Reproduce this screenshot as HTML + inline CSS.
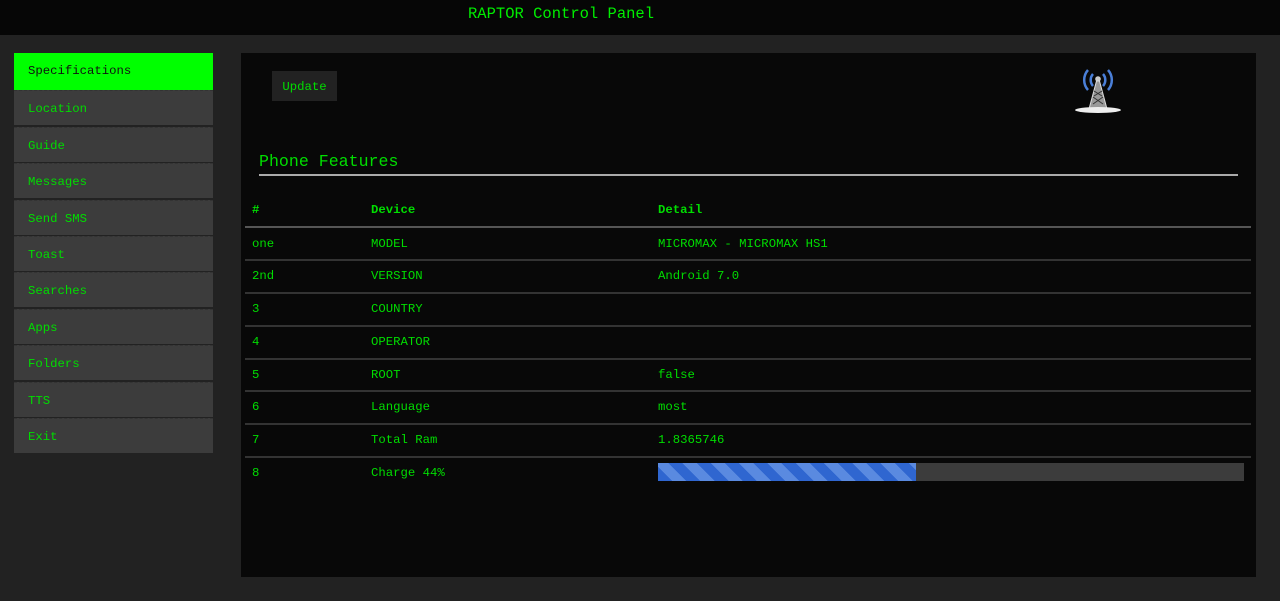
<!DOCTYPE html>
<html><head><style>
*{margin:0;padding:0;box-sizing:border-box}
body{width:1280px;height:601px;background:#222;font-family:"Liberation Mono","DejaVu Sans Mono",monospace;color:#0d0;position:relative;overflow:hidden;font-size:12.3px}
.hdr{position:absolute;left:0;top:0;width:1280px;height:35px;background:#060606}
.hdr span{position:absolute;left:468px;top:5px;font-size:15.5px;color:#0e0}
.nav{position:absolute;left:14px;width:199px;height:35px;background:#3c3c3c;border-top:1px dashed #333;padding-left:14px;line-height:36px;color:#0d0}
.nav.act{background:#0f0;color:#111;height:37px;line-height:37px;border-top:none}
.main{position:absolute;left:241px;top:53px;width:1015px;height:524px;background:#080808}
.abs{position:absolute}
.btn{left:31px;top:18px;width:65px;height:30px;background:#222;line-height:32px;text-align:center;color:#0d0}
.ttl{left:18px;top:99px;font-size:16.6px;color:#0d0}
.tl{left:18px;top:121px;width:979px;height:2px;background:#aaa}
.row{position:absolute;left:4px;width:1006px;height:2px;background:#333}
.c{position:absolute;color:#0d0;margin-top:1px}
b{font-weight:bold}
</style></head><body>
<div class="hdr"><span>RAPTOR Control Panel</span></div>
<div class="nav act" style="top:53px">Specifications</div>
<div class="nav" style="top:90px">Location</div>
<div class="nav" style="top:127px">Guide</div>
<div class="nav" style="top:163px">Messages</div>
<div class="nav" style="top:200px">Send SMS</div>
<div class="nav" style="top:236px">Toast</div>
<div class="nav" style="top:272px">Searches</div>
<div class="nav" style="top:309px">Apps</div>
<div class="nav" style="top:345px">Folders</div>
<div class="nav" style="top:382px">TTS</div>
<div class="nav" style="top:418px">Exit</div>
<div class="main">
<div class="abs btn">Update</div>
<svg class="abs" style="left:832px;top:14px" width="50" height="48" viewBox="0 0 50 48">
<g fill="none" stroke="#4a7fd8" stroke-width="2.5">
<path d="M20 7a9 9 0 0 0 0 12"/><path d="M15 3a15 15 0 0 0 0 20"/>
<path d="M30 7a9 9 0 0 1 0 12"/><path d="M35 3a15 15 0 0 1 0 20"/></g>
<circle cx="25" cy="12" r="2.8" fill="#ccc"/>
<path d="M23.5 14L16 42h18L26.5 14z" fill="#999" stroke="#ddd" stroke-width="1"/>
<path d="M20 30l10 7M30 30l-10 7M21 24l8 5M29 24l-8 5" stroke="#333" stroke-width="1"/>
<ellipse cx="25" cy="43" rx="23" ry="3" fill="#eee"/>
</svg>
<div class="abs ttl">Phone Features</div>
<div class="abs tl"></div>
<div class="c" style="left:11px;top:149px"><b>#</b></div>
<div class="c" style="left:130px;top:149px"><b>Device</b></div>
<div class="c" style="left:417px;top:149px"><b>Detail</b></div>
<div class="row" style="top:173px;background:#555"></div>
<div class="c" style="left:11px;top:183px">one</div><div class="c" style="left:130px;top:183px">MODEL</div><div class="c" style="left:417px;top:183px">MICROMAX - MICROMAX HS1</div>
<div class="row" style="top:206px"></div>
<div class="c" style="left:11px;top:215px">2nd</div><div class="c" style="left:130px;top:215px">VERSION</div><div class="c" style="left:417px;top:215px">Android 7.0</div>
<div class="row" style="top:239px"></div>
<div class="c" style="left:11px;top:248px">3</div><div class="c" style="left:130px;top:248px">COUNTRY</div>
<div class="row" style="top:272px"></div>
<div class="c" style="left:11px;top:281px">4</div><div class="c" style="left:130px;top:281px">OPERATOR</div>
<div class="row" style="top:305px"></div>
<div class="c" style="left:11px;top:314px">5</div><div class="c" style="left:130px;top:314px">ROOT</div><div class="c" style="left:417px;top:314px">false</div>
<div class="row" style="top:337px"></div>
<div class="c" style="left:11px;top:346px">6</div><div class="c" style="left:130px;top:346px">Language</div><div class="c" style="left:417px;top:346px">most</div>
<div class="row" style="top:370px"></div>
<div class="c" style="left:11px;top:379px">7</div><div class="c" style="left:130px;top:379px">Total Ram</div><div class="c" style="left:417px;top:379px">1.8365746</div>
<div class="row" style="top:403px"></div>
<div class="c" style="left:11px;top:412px">8</div><div class="c" style="left:130px;top:412px">Charge 44%</div>
<div class="abs" style="left:417px;top:410px;width:586px;height:18px;background:#3c3c3c">
<div style="width:258px;height:18px;background:repeating-linear-gradient(45deg,#2f66d0 0 10px,#5a8ae0 10px 20px)"></div></div>
</div>
</body></html>
